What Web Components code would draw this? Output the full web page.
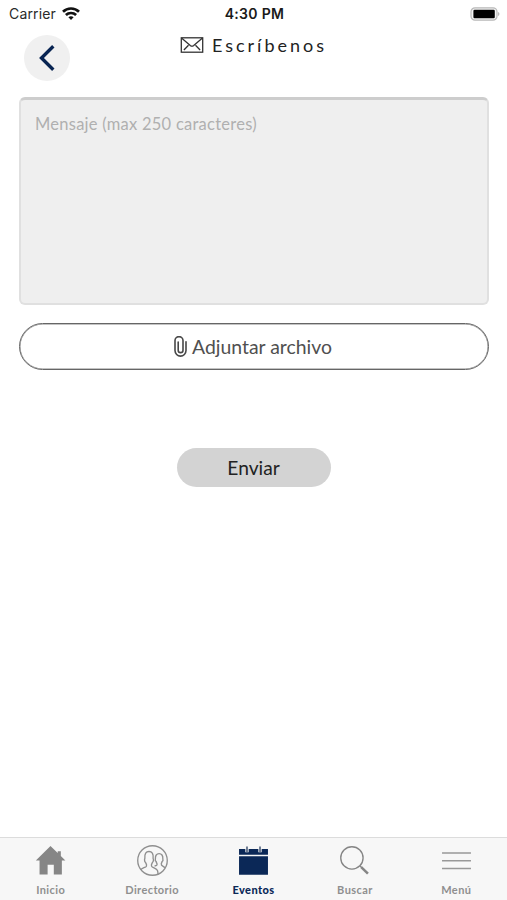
<!DOCTYPE html>
<html lang="es">
<head>
<meta charset="utf-8">
<meta name="viewport" content="width=device-width, initial-scale=1">
<title>Escríbenos</title>
<style>
    html, body {
        margin: 0;
        height: 100%;
        background: #fff;
        font-family: Lato, "Open Sans", sans-serif;
    }
</style>
</head>
<body>
<contact-app></contact-app>

<script>
class StatusBar extends HTMLElement {
    constructor() {
        super();
        this.attachShadow({ mode: 'open' });
    }

    connectedCallback() {
        this.shadowRoot.innerHTML = `
            <style>
                :host {
                    display: grid;
                    grid-template-columns: 1fr auto 1fr;
                    align-items: center;
                    height: 27px;
                    box-sizing: border-box;
                    padding: 0 7px 0 9px;
                    font-family: Inter, "Liberation Sans", sans-serif;
                    font-size: 14px;
                    color: #2a2a2a;
                }

                .carrier {
                    display: flex;
                    align-items: center;
                    gap: 6px;
                }

                .name {
                    letter-spacing: 0.15px;
                }

                .time {
                    font-size: 14px;
                    font-weight: 600;
                    letter-spacing: 0.3px;
                    color: #1a1a1a;
                }

                .battery {
                    justify-self: end;
                }

                svg {
                    display: block;
                }
            </style>
            <div class="carrier">
                <span class="name">Carrier</span>
                <svg width="18" height="14" viewBox="0 0 18 14" fill="none" stroke="#111" stroke-width="2.7">
                    <path d="M1 4.700C5.400.4 12.600.4 17 4.700"/>
                    <path d="M3.900 8c2.800-2.700 7.400-2.700 10.200 0"/>
                    <path d="M6.400 10.300c1.500-1.400 3.700-1.400 5.200 0L9 13z" fill="#111" stroke="none"/>
                </svg>
            </div>
            <span class="time"><slot></slot></span>
            <svg class="battery" width="30" height="14" viewBox="0 0 30 14">
                <rect x="1" y=".8" width="26" height="12.4" rx="4" fill="#f4f4f4" stroke="#b8b8b8" stroke-width="1.2"/>
                <rect x="3.4" y="2.7" width="21.4" height="8.6" rx="1.2" fill="#000"/>
                <path d="M28.2 5v4c1.600-.6 1.600-3.400 0-4z" fill="#aaa"/>
            </svg>
        `;
    }
}

class PageHeader extends HTMLElement {
    constructor() {
        super();
        this.attachShadow({ mode: 'open' });
    }

    connectedCallback() {
        this.shadowRoot.innerHTML = `
            <style>
                :host {
                    display: grid;
                    grid-template-columns: 46px 1fr 46px;
                    align-items: start;
                    height: 70px;
                    box-sizing: border-box;
                    padding: 7px 24px 0;
                }

                .back {
                    display: grid;
                    place-items: center;
                    width: 46px;
                    height: 46px;
                    margin-top: 0.5px;
                    padding: 0 1px 0 0;
                    border: 0;
                    border-radius: 50%;
                    background: #f0f0f0;
                }

                h1 {
                    display: flex;
                    justify-content: center;
                    align-items: center;
                    gap: 8px;
                    margin: 0;
                    height: 22px;
                    font-size: 18px;
                    font-weight: 400;
                    letter-spacing: 2.95px;
                    color: #222;
                }

                svg {
                    display: block;
                }
            </style>
            <button class="back" aria-label="Volver">
                <svg width="18" height="28" viewBox="0 0 18 28" fill="none" stroke="#082452" stroke-width="3.4">
                    <path d="M15.3 2.3 3.5 14l11.8 11.7"/>
                </svg>
            </button>
            <h1>
                <svg width="24" height="16" viewBox="0 0 23 16" fill="none" stroke="#333" stroke-width="1.3">
                    <rect x=".8" y=".8" width="21.4" height="14.4"/>
                    <path d="m1 1 8.800 7.500c1 .8 2.400.8 3.400 0L22 1M3.400 13 8 8.200M19.600 13 15 8.200"/>
                </svg>
                <span><slot></slot></span>
            </h1>
        `;
    }
}

class MessageField extends HTMLElement {
    constructor() {
        super();
        this.attachShadow({ mode: 'open' });
    }

    connectedCallback() {
        this.shadowRoot.innerHTML = `
            <style>
                :host {
                    display: block;
                    height: 208px;
                    box-sizing: border-box;
                    padding: 14px 14px;
                    border: 2px solid #e0e0e0;
                    border-top: 3px solid #cdcdcd;
                    border-radius: 6px;
                    background: #efefef;
                    font-size: 16.5px;
                    line-height: 20px;
                    letter-spacing: 0.25px;
                    color: #b0b0b0;
                }
            </style>
            <slot></slot>
        `;
    }
}

class AttachButton extends HTMLElement {
    constructor() {
        super();
        this.attachShadow({ mode: 'open' });
    }

    connectedCallback() {
        this.shadowRoot.innerHTML = `
            <style>
                :host {
                    display: block;
                }

                button {
                    display: flex;
                    justify-content: center;
                    align-items: center;
                    gap: 5px;
                    width: 100%;
                    height: 47px;
                    padding: 0 2px 0 0;
                    border: 1px solid #666;
                    border-radius: 24px;
                    background: #fff;
                    box-shadow: inset 0 0 0 0.5px #888;
                    font: inherit;
                    font-size: 19.4px;
                    color: #505050;
                }
            </style>
            <button>
                <svg width="13" height="21" viewBox="0 0 13 21" fill="none" stroke="#484848" stroke-width="1.6" stroke-linecap="round">
                    <path d="M9 5v9.200a2.400 2.400 0 0 1-4.800 0V6M9 14V4.600A3.900 3.900 0 0 0 1 4.600v10a5.500 5.500 0 0 0 11 0V5.800"/>
                </svg>
                <span class="label"><slot></slot></span>
            </button>
        `;
    }
}

class SendButton extends HTMLElement {
    constructor() {
        super();
        this.attachShadow({ mode: 'open' });
    }

    connectedCallback() {
        this.shadowRoot.innerHTML = `
            <style>
                :host {
                    display: block;
                }

                button {
                    display: block;
                    width: 154px;
                    height: 39px;
                    padding: 0 1px 0 0;
                    border: 0;
                    border-radius: 20px;
                    background: #d3d3d3;
                    font: inherit;
                    font-size: 19.2px;
                    color: #222;
                }
            </style>
            <button><slot></slot></button>
        `;
    }
}

const TAB_ICONS = {
    home: `
        <path d="M15 1 .8 15h3.600v13.500h7.800V19h6v9.500H26V15h3.400L25 10.700V6h-3v1.800z" fill="#868686"/>`,
    people: `
        <g fill="none" stroke="#8f8f8f" stroke-width="1.3">
            <circle cx="15" cy="15" r="14.3"/>
            <path d="M3.600 24c1.200-1.900 4.800-2.100 5.500-3.500.6-1.300-.3-2.300-.8-3.600-.7-.5-1-1.500-1-2.500 0-.6.200-1 .3-1.400-.4-4.700 1.200-6.700 4-6.700s4.500 2 4 6.700c.2.400.3.800.3 1.400 0 1-.4 2-1 2.500-.5 1.300-1.400 2.300-.8 3.600.8 1.600 4.900 1.800 5.700 4.200.4 1.200.5 2.300.5 3.400"/>
            <path d="M17 20.300c1.900-.3 2.900-.9 2.300-2.300-.4-.7-.6-1.300-.8-2-.9-.6-1-1.700-.7-2.700-.2-3.200 1.200-4.900 3.600-4.900s3.800 1.700 3.600 4.900c.3 1 .2 2.100-.7 2.700-.2.700-.4 1.300-.8 2-.6 2.200 2 2.400 3.600 4"/>
        </g>`,
    calendar: `
        <path d="M1 3.800h28v5.700H1zM1 11h28v17.700H1z" fill="#0b2857"/>
        <path d="M8.700 2v5M21.300 2v5" stroke="#f7f7f7" stroke-width="3.2"/>
        <path d="M8.700 1.500v5.300M21.300 1.500v5.300" stroke="#53647f" stroke-width="1.6"/>`,
    search: `
        <g fill="none" stroke="#858585">
            <circle cx="12.5" cy="12.5" r="10.8" stroke-width="1.3"/>
            <path d="m20.300 20.200 1.800 1.800" stroke-width="1.3"/>
            <path d="m21.500 21.300 6.500 6.500" stroke-width="2.4"/>
        </g>`,
    menu: `
        <path d="M1 7.700h28M1 15.200h28M1 22.700h28" stroke="#999" stroke-width="1.5"/>`
};

class TabItem extends HTMLElement {
    constructor() {
        super();
        this.attachShadow({ mode: 'open' });
    }

    connectedCallback() {
        const icon = TAB_ICONS[this.getAttribute('icon')] || '';

        this.shadowRoot.innerHTML = `
            <style>
                :host {
                    display: flex;
                    flex-direction: column;
                    align-items: center;
                    gap: 7px;
                    font-size: 11px;
                    line-height: 14px;
                    font-weight: 700;
                    letter-spacing: 0.4px;
                    color: #8f8f8f;
                }

                :host([active]) {
                    color: #0b2857;
                    font-weight: 900;
                }
            </style>
            <svg width="31" height="31" viewBox="0 0 30 30">${icon}</svg>
            <span><slot></slot></span>
        `;
    }
}

class TabBar extends HTMLElement {
    constructor() {
        super();
        this.attachShadow({ mode: 'open' });
    }

    connectedCallback() {
        this.shadowRoot.innerHTML = `
            <style>
                :host {
                    display: grid;
                    grid-template-columns: repeat(5, 1fr);
                    height: 63px;
                    box-sizing: border-box;
                    padding-top: 7px;
                    border-top: 1px solid #dcdcdc;
                    background: #f7f7f7;
                }
            </style>
            <slot></slot>
        `;
    }
}

class ContactApp extends HTMLElement {
    constructor() {
        super();
        this.attachShadow({ mode: 'open' });
    }

    connectedCallback() {
        this.shadowRoot.innerHTML = `
            <style>
                :host {
                    display: flex;
                    flex-direction: column;
                    height: 100vh;
                    overflow: hidden;
                }

                main {
                    flex: 1;
                    display: flex;
                    flex-direction: column;
                    padding: 0 18px 0 19px;
                }

                attach-button {
                    margin-top: 18px;
                }

                send-button {
                    align-self: center;
                    margin-top: 78px;
                }
            </style>
            <status-bar>4:30 PM</status-bar>
            <page-header>Escríbenos</page-header>
            <main>
                <message-field>Mensaje (max 250 caracteres)</message-field>
                <attach-button>Adjuntar archivo</attach-button>
                <send-button>Enviar</send-button>
            </main>
            <tab-bar>
                <tab-item icon="home">Inicio</tab-item>
                <tab-item icon="people">Directorio</tab-item>
                <tab-item icon="calendar" active>Eventos</tab-item>
                <tab-item icon="search">Buscar</tab-item>
                <tab-item icon="menu">Menú</tab-item>
            </tab-bar>
        `;
    }
}

customElements.define('status-bar', StatusBar);
customElements.define('page-header', PageHeader);
customElements.define('message-field', MessageField);
customElements.define('attach-button', AttachButton);
customElements.define('send-button', SendButton);
customElements.define('tab-item', TabItem);
customElements.define('tab-bar', TabBar);
customElements.define('contact-app', ContactApp);
</script>
</body>
</html>
